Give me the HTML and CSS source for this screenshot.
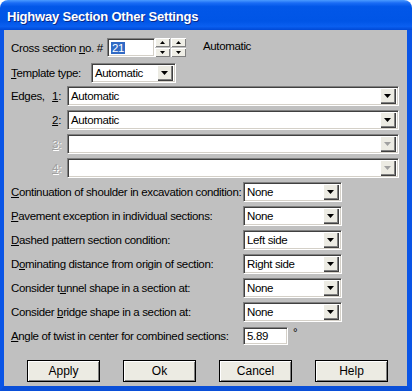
FILE: index.html
```html
<!DOCTYPE html>
<html lang="en">
<head>
    <meta charset="UTF-8">
    <title>Highway Section Other Settings</title>
    <link rel="stylesheet" href="styles.css">
</head>
<body>
    <div class="window">
        <div class="titlebar"><span class="title">Highway Section Other Settings</span></div>
        <div class="client">
            <div class="row row-cross">
                <label class="lbl-cross">Cross section <u>n</u>o. #</label>
                <div class="field num"><span class="sel">21</span></div>
                <div class="spin"><span class="spin-btn up"></span><span class="spin-btn down"></span></div>
                <div class="spin second"><span class="spin-btn up"></span><span class="spin-btn down"></span></div>
                <span class="auto-text">Automatic</span>
            </div>

            <div class="row row-template">
                <label class="lbl-template"><u>T</u>emplate type:</label>
                <div class="combo combo-template"><span class="combo-text">Automatic</span><span class="combo-btn"></span></div>
            </div>

            <div class="edges">
                <div class="edge-row">
                    <label class="edge-lbl"><span>Edges,</span><span><u>1</u>:</span></label>
                    <div class="combo"><span class="combo-text">Automatic</span><span class="combo-btn"></span></div>
                </div>
                <div class="edge-row">
                    <label class="edge-lbl"><span></span><span><u>2</u>:</span></label>
                    <div class="combo"><span class="combo-text">Automatic</span><span class="combo-btn"></span></div>
                </div>
                <div class="edge-row">
                    <label class="edge-lbl disabled"><span></span><span><u>3</u>:</span></label>
                    <div class="combo"><span class="combo-text"></span><span class="combo-btn off"></span></div>
                </div>
                <div class="edge-row">
                    <label class="edge-lbl disabled"><span></span><span><u>4</u>:</span></label>
                    <div class="combo"><span class="combo-text"></span><span class="combo-btn off"></span></div>
                </div>
            </div>

            <div class="settings">
                <label><u>C</u>ontinuation of shoulder in excavation condition:</label>
                <div class="combo"><span class="combo-text">None</span><span class="combo-btn"></span></div>

                <label><u>P</u>avement exception in individual sections:</label>
                <div class="combo"><span class="combo-text">None</span><span class="combo-btn"></span></div>

                <label><u>D</u>ashed pattern section condition:</label>
                <div class="combo"><span class="combo-text">Left side</span><span class="combo-btn"></span></div>

                <label>D<u>o</u>minating distance from origin of section:</label>
                <div class="combo"><span class="combo-text">Right side</span><span class="combo-btn"></span></div>

                <label>Consider t<u>u</u>nnel shape in a section at:</label>
                <div class="combo"><span class="combo-text">None</span><span class="combo-btn"></span></div>

                <label>Consider <u>b</u>ridge shape in a section at:</label>
                <div class="combo"><span class="combo-text">None</span><span class="combo-btn"></span></div>

                <label><u>A</u>ngle of twist in center for combined sections:</label>
                <div class="angle">
                    <div class="field angle-input">5.89</div>
                    <span class="deg">°</span>
                </div>
            </div>

            <div class="buttons">
                <button class="btn">Apply</button>
                <button class="btn">Ok</button>
                <button class="btn">Cancel</button>
                <button class="btn">Help</button>
            </div>
        </div>
    </div>
</body>
</html>
```

FILE: styles.css
```css
body {
    margin: 0;
    background: #fff;
    font-family: "Liberation Sans", Arial, sans-serif;
    font-size: 11.5px;
    letter-spacing: -0.35px;
    color: #000;
}
label {
    white-space: nowrap;
}
.window {
    width: 412px;
    height: 391px;
    display: flex;
    flex-direction: column;
}
.titlebar {
    height: 30px;
    flex: none;
    border-radius: 8px 8px 0 0;
    background: linear-gradient(#4b9bff 0%, #1a6cf5 10%, #0257e8 22%, #0055e6 70%, #0a5ff0 88%, #0049d6 100%);
}
.title {
    display: block;
    padding: 4px 0 0 7px;
    line-height: 26px;
    color: #fff;
    font-weight: bold;
    font-size: 13px;
    letter-spacing: -0.2px;
    text-shadow: 1px 1px 0 #0a2a8a;
}
.client {
    flex: 1;
    background: #c0c0c0;
    border-left: 4px solid #0a55e6;
    border-right: 5px solid #0a55e6;
    border-bottom: 5px solid #0a4fd8;
    padding: 8px 0 0 7px;
}
u {
    text-decoration: underline;
    text-underline-offset: 1px;
}

/* sunken edit fields */
.field, .combo {
    box-sizing: border-box;
    background: #fff;
    border-top: 1px solid #808080;
    border-left: 1px solid #808080;
    border-bottom: 1px solid #fff;
    border-right: 1px solid #fff;
    box-shadow: inset 1px 1px 0 #404040, inset -1px -1px 0 #d4d0c8;
}

.row {
    display: flex;
    align-items: center;
}
.row-cross {
    height: 19px;
}
.lbl-cross {
    width: 96px;
}
.num {
    width: 48px;
    height: 19px;
    padding: 2px 0 0 3px;
    line-height: 14px;
}
.sel {
    background: #316ac5;
    color: #fff;
    padding: 0 1px;
}
.spin {
    width: 15px;
    height: 19px;
    display: flex;
    flex-direction: column;
    gap: 1px;
}
.spin.second {
    margin-left: 1px;
}
.spin-btn {
    flex: 1;
    position: relative;
    background: #efeee6;
    box-shadow: inset 1px 1px 0 #fff, inset -1px -1px 0 #808080;
}
.spin-btn::after {
    content: "";
    position: absolute;
    left: 5px;
    top: 3px;
    width: 5px;
    height: 3px;
    background: #000;
}
.spin-btn.up::after {
    clip-path: polygon(50% 0, 100% 100%, 0 100%);
}
.spin-btn.down::after {
    clip-path: polygon(0 0, 100% 0, 50% 100%);
}
.auto-text {
    margin-left: 17px;
    margin-top: -4px;
}

.row-template {
    margin-top: 6px;
    height: 20px;
}
.lbl-template {
    width: 80px;
}
.combo {
    height: 20px;
    display: flex;
    align-items: center;
    padding: 2px 2px 2px 0;
}
.combo-template {
    width: 85px;
}
.combo-text {
    flex: 1;
    padding-left: 3px;
}
.combo-btn {
    width: 16px;
    height: 16px;
    position: relative;
    background: #ecebe3;
    box-shadow: inset 1px 1px 0 #fff, inset -1px -1px 0 #404040, inset -2px -2px 0 #808080;
}
.combo-btn::after {
    content: "";
    position: absolute;
    left: 4px;
    top: 6px;
    width: 7px;
    height: 4px;
    background: #000;
    clip-path: polygon(0 0, 100% 0, 50% 100%);
}
.combo-btn.off::after {
    background: #a0a0a0;
}

.edges {
    margin-top: 3px;
}
.edge-row {
    display: grid;
    grid-template-columns: 50px 332px;
    column-gap: 6px;
    align-items: center;
    height: 20px;
    margin-bottom: 4px;
}
.edge-lbl {
    display: flex;
    justify-content: space-between;
}
.edge-lbl.disabled {
    color: #a0a0a0;
    text-shadow: 1px 1px 0 #fff;
}

.settings {
    display: grid;
    grid-template-columns: 232px 99px;
    grid-auto-rows: 20px;
    row-gap: 4px;
    align-items: center;
}
.angle {
    display: flex;
    align-items: center;
}
.angle-input {
    width: 45px;
    height: 18px;
    padding: 1px 0 0 3px;
    line-height: 15px;
}
.deg {
    margin-left: 5px;
    margin-top: -8px;
}

.buttons {
    display: flex;
    gap: 23px;
    margin-top: 14px;
    padding-left: 16px;
}
.btn {
    width: 73px;
    height: 22px;
    padding: 0;
    border: 1px solid #000;
    background: #ecebe3;
    box-shadow: inset 1px 1px 0 #fff, inset -1px -1px 0 #808080;
    font-family: "Liberation Sans", Arial, sans-serif;
    font-size: 12px;
    color: #000;
}
```
